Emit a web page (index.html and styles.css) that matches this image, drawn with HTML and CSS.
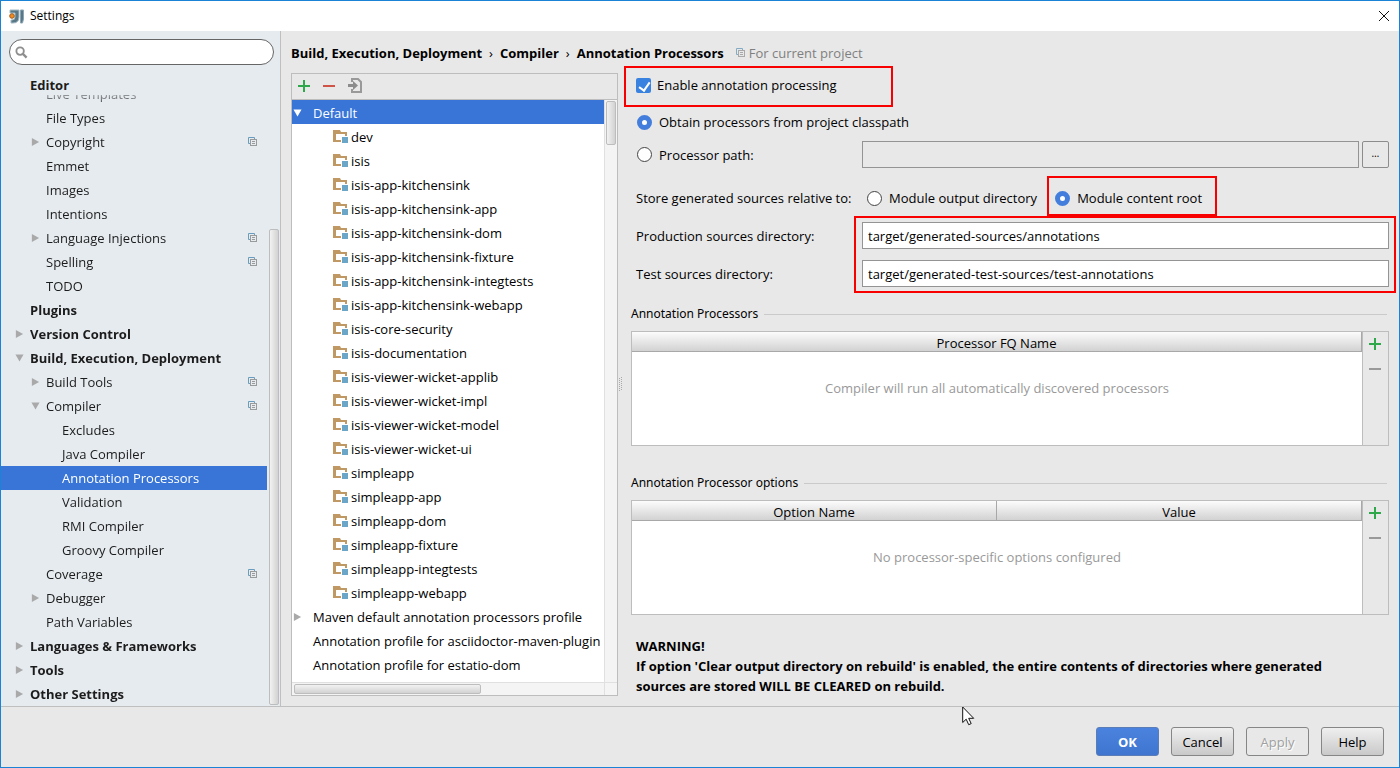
FILE: index.html
```html
<!DOCTYPE html>
<html lang="en">
<head>
<meta charset="utf-8">
<title>Settings</title>
<link rel="stylesheet" href="styles.css">
</head>
<body>
<svg class="defs" aria-hidden="true">
  <symbol id="copy" viewBox="0 0 10 10"><path d="M2.5 6.5H.5V.5h6v2" fill="none" stroke="#6a9cbb"/><rect x="2.500" y="2.500" width="6" height="6" fill="none" stroke="#9a9a9a"/><path d="M4 4.500h3M4 6.500h3" stroke="#9a9a9a"/></symbol>
  <symbol id="right" viewBox="0 0 10 10"><path d="M1 0.500 9 5 1 9.500Z" fill="currentColor"/></symbol>
  <symbol id="down" viewBox="0 0 10 10"><path d="M0.500 1h9L5 9Z" fill="currentColor"/></symbol>
  <symbol id="folder" viewBox="0 0 16 14"><path d="M0 0h7l1 2h6v4h-2V4H3v6h5v2H0Z" fill="#c09863"/><rect x="9" y="7" width="6" height="6" fill="#6ba5c8"/></symbol>
  <symbol id="plus" viewBox="0 0 12 12"><path d="M5 0h2v5h5v2H7v5H5V7H0V5h5Z" fill="#2fa74b"/></symbol>
  <symbol id="minus" viewBox="0 0 12 12"><path d="M0 5h12v2H0Z" fill="currentColor"/></symbol>
</svg>
<div class="window">
  <header class="titlebar">
    <svg class="logo" viewBox="0 0 16 15"><path d="M1 1h9v7q0 6-6 6H2v-3h1q3 0 3-3V4H1Z" fill="#587888" stroke="#a4bac4"/><path d="M11.500 1h3v9l-1 4h-2Z" fill="#587888" stroke="#8ba5b2"/><circle cx="3" cy="7" r="2.300" fill="#f28c1e" stroke="#a05a20"/></svg>
    <h1>Settings</h1>
    <button class="close" aria-label="Close"><svg viewBox="0 0 12 12"><path d="m1 1 10 10M11 1 1 11" stroke="#111" fill="none"/></svg></button>
  </header>
  <div class="body">
    <aside class="sidebar">
      <div class="search">
        <svg viewBox="0 0 14 14"><circle cx="5.500" cy="5.500" r="4" fill="none" stroke="#8e8e8e" stroke-width="2"/><path d="m8.500 8.500 4 4" stroke="#8e8e8e" stroke-width="2.500"/></svg>
        <input type="search" aria-label="Search settings">
      </div>
      <div class="group">Editor</div>
      <div class="nav-area">
        <ul class="nav">
          <li class="l2">Live Templates</li>
          <li class="l2">File Types</li>
          <li class="l2"><svg class="arrow"><use href="#right"/></svg>Copyright<svg class="copy"><use href="#copy"/></svg></li>
          <li class="l2">Emmet</li>
          <li class="l2">Images</li>
          <li class="l2">Intentions</li>
          <li class="l2"><svg class="arrow"><use href="#right"/></svg>Language Injections<svg class="copy"><use href="#copy"/></svg></li>
          <li class="l2">Spelling<svg class="copy"><use href="#copy"/></svg></li>
          <li class="l2">TODO</li>
          <li class="l1">Plugins</li>
          <li class="l1"><svg class="arrow"><use href="#right"/></svg>Version Control</li>
          <li class="l1"><svg class="arrow"><use href="#down"/></svg>Build, Execution, Deployment</li>
          <li class="l2"><svg class="arrow"><use href="#right"/></svg>Build Tools<svg class="copy"><use href="#copy"/></svg></li>
          <li class="l2"><svg class="arrow"><use href="#down"/></svg>Compiler<svg class="copy"><use href="#copy"/></svg></li>
          <li class="l3">Excludes</li>
          <li class="l3">Java Compiler</li>
          <li class="l3 selected">Annotation Processors</li>
          <li class="l3">Validation</li>
          <li class="l3">RMI Compiler</li>
          <li class="l3">Groovy Compiler</li>
          <li class="l2">Coverage<svg class="copy"><use href="#copy"/></svg></li>
          <li class="l2"><svg class="arrow"><use href="#right"/></svg>Debugger</li>
          <li class="l2">Path Variables</li>
          <li class="l1"><svg class="arrow"><use href="#right"/></svg>Languages &amp; Frameworks</li>
          <li class="l1"><svg class="arrow"><use href="#right"/></svg>Tools</li>
          <li class="l1"><svg class="arrow"><use href="#right"/></svg>Other Settings</li>
        </ul>
        <div class="nav-scroll"><div class="thumb"></div></div>
      </div>
    </aside>
    <main class="main">
      <div class="crumbs">
        <b>Build, Execution, Deployment</b><span>›</span><b>Compiler</b><span>›</span><b>Annotation Processors</b>
        <svg class="copy"><use href="#copy"/></svg><span class="scope">For current project</span>
      </div>
      <div class="panels">
        <section class="profiles">
          <div class="toolbar">
            <button aria-label="Add"><svg viewBox="0 0 12 12"><use href="#plus"/></svg></button>
            <button class="red" aria-label="Remove"><svg viewBox="0 0 12 12"><use href="#minus"/></svg></button>
            <button aria-label="Move to"><svg class="move" viewBox="0 0 14 15"><path d="M4 4V1h6l3 3v10H4v-3" fill="none" stroke="#999" stroke-width="2"/><path d="M0 6h5V3l5 4.500L5 12V9H0Z" fill="#8c8c8c"/></svg></button>
          </div>
          <div class="list-area">
            <ul class="list">
              <li class="root selected"><svg class="arrow"><use href="#down"/></svg>Default</li>
              <li><svg class="folder"><use href="#folder"/></svg>dev</li>
              <li><svg class="folder"><use href="#folder"/></svg>isis</li>
              <li><svg class="folder"><use href="#folder"/></svg>isis-app-kitchensink</li>
              <li><svg class="folder"><use href="#folder"/></svg>isis-app-kitchensink-app</li>
              <li><svg class="folder"><use href="#folder"/></svg>isis-app-kitchensink-dom</li>
              <li><svg class="folder"><use href="#folder"/></svg>isis-app-kitchensink-fixture</li>
              <li><svg class="folder"><use href="#folder"/></svg>isis-app-kitchensink-integtests</li>
              <li><svg class="folder"><use href="#folder"/></svg>isis-app-kitchensink-webapp</li>
              <li><svg class="folder"><use href="#folder"/></svg>isis-core-security</li>
              <li><svg class="folder"><use href="#folder"/></svg>isis-documentation</li>
              <li><svg class="folder"><use href="#folder"/></svg>isis-viewer-wicket-applib</li>
              <li><svg class="folder"><use href="#folder"/></svg>isis-viewer-wicket-impl</li>
              <li><svg class="folder"><use href="#folder"/></svg>isis-viewer-wicket-model</li>
              <li><svg class="folder"><use href="#folder"/></svg>isis-viewer-wicket-ui</li>
              <li><svg class="folder"><use href="#folder"/></svg>simpleapp</li>
              <li><svg class="folder"><use href="#folder"/></svg>simpleapp-app</li>
              <li><svg class="folder"><use href="#folder"/></svg>simpleapp-dom</li>
              <li><svg class="folder"><use href="#folder"/></svg>simpleapp-fixture</li>
              <li><svg class="folder"><use href="#folder"/></svg>simpleapp-integtests</li>
              <li><svg class="folder"><use href="#folder"/></svg>simpleapp-webapp</li>
              <li class="root"><svg class="arrow"><use href="#right"/></svg>Maven default annotation processors profile</li>
              <li class="root">Annotation profile for asciidoctor-maven-plugin</li>
              <li class="root">Annotation profile for estatio-dom</li>
            </ul>
            <div class="vscroll"><div class="thumb"></div></div>
            <div class="hscroll"><div class="thumb"></div></div>
            <div class="corner"></div>
          </div>
        </section>
        <div class="splitter"><svg viewBox="0 0 4 15"><path d="M.5 1v14M2.500 0v14" stroke="#aaa" stroke-dasharray="1 1"/></svg></div>
        <form class="form">
          <div class="row enable"><label class="check marked"><input type="checkbox" checked>Enable annotation processing</label></div>
          <div class="row obtain"><label class="radio"><input type="radio" name="source" checked>Obtain processors from project classpath</label></div>
          <div class="row fields path">
            <label class="radio"><input type="radio" name="source">Processor path:</label>
            <div class="path-field"><input class="text" type="text" aria-label="Processor path" disabled><button type="button" class="browse" aria-label="Browse">…</button></div>
          </div>
          <div class="row fields store">
            <span>Store generated sources relative to:</span>
            <div class="choices">
              <label class="radio"><input type="radio" name="root">Module output directory</label>
              <label class="radio marked"><input type="radio" name="root" checked>Module content root</label>
            </div>
          </div>
          <div class="dirs">
            <label for="prod">Production sources directory:</label>
            <label for="test">Test sources directory:</label>
            <div class="dir-inputs marked">
              <input class="text" id="prod" type="text" value="target/generated-sources/annotations">
              <input class="text" id="test" type="text" value="target/generated-test-sources/test-annotations">
            </div>
          </div>
          <h2 class="legend">Annotation Processors</h2>
          <div class="table-box">
            <table>
              <thead><tr><th>Processor FQ Name</th></tr></thead>
              <tbody><tr><td>Compiler will run all automatically discovered processors</td></tr></tbody>
            </table>
            <div class="actions"><button type="button" aria-label="Add processor"><svg viewBox="0 0 12 12"><use href="#plus"/></svg></button><button type="button" aria-label="Remove processor"><svg viewBox="0 0 12 12"><use href="#minus"/></svg></button></div>
          </div>
          <h2 class="legend second">Annotation Processor options</h2>
          <div class="table-box">
            <table>
              <thead><tr><th>Option Name</th><th>Value</th></tr></thead>
              <tbody><tr><td colspan="2">No processor-specific options configured</td></tr></tbody>
            </table>
            <div class="actions"><button type="button" aria-label="Add option"><svg viewBox="0 0 12 12"><use href="#plus"/></svg></button><button type="button" aria-label="Remove option"><svg viewBox="0 0 12 12"><use href="#minus"/></svg></button></div>
          </div>
          <p class="warning">WARNING!<br>If option 'Clear output directory on rebuild' is enabled, the entire contents of directories where generated<br>sources are stored WILL BE CLEARED on rebuild.</p>
        </form>
      </div>
    </main>
  </div>
  <footer class="footer">
    <button class="btn primary">OK</button>
    <button class="btn">Cancel</button>
    <button class="btn" disabled>Apply</button>
    <button class="btn">Help</button>
  </footer>
  <svg class="cursor" viewBox="0 0 13 20"><path d="M.7 1v15.500l3.500-3.300 2.500 5.500 2.500-1.100-2.500-5.300h5Z" fill="#fff" stroke="#111"/></svg>
</div>
</body>
</html>
```
FILE: styles.css
```css
* { box-sizing: border-box; }
body { margin: 0; font: 13px/24px "Open Sans", "Noto Sans", sans-serif; color: #000; }
ul { list-style: none; margin: 0; padding: 0; }
button, input { font: inherit; color: inherit; margin: 0; padding: 0; }
svg { display: block; flex: none; }
.defs { position: absolute; width: 0; height: 0; }

.window { position: relative; display: flex; flex-direction: column; min-height: 100vh; border: 1px solid #1a83d5; background: #e8e8e8; }
.titlebar { display: flex; align-items: center; gap: 5px; height: 30px; padding: 0 9px 0 8px; background: #fff; }
.titlebar h1 { flex: 1; margin: 0; font-size: 12px; font-weight: 400; }
.logo { width: 16px; height: 15px; }
.close { border: 0; background: none; }
.close svg { width: 12px; height: 12px; }
.body { flex: 1; display: flex; border-bottom: 1px solid #bfbfbf; }

.sidebar { display: flex; flex-direction: column; width: 280px; flex: none; background: #e6ebef; border-right: 1px solid #bfbfbf; color: #1c1c1c; }
.search { display: flex; align-items: center; gap: 4px; height: 26px; margin: 8px 6px 0 8px; padding: 0 10px 0 5px; background: #fff; border: 1px solid #666; border-radius: 13px; }
.search svg { width: 13px; height: 13px; }
.search input { flex: 1; min-width: 0; border: 0; outline: 0; background: none; }
.group { height: 22px; margin-top: 8px; padding-left: 29px; font-weight: 700; }
.nav-area { flex: 1 1 0; display: flex; height: 0; }
.nav { flex: 1; display: flex; flex-direction: column; justify-content: flex-end; overflow: hidden; mask-image: linear-gradient(rgba(0, 0, 0, 0.4), #000 12px); }
.nav li { position: relative; flex: none; display: flex; align-items: center; height: 24px; padding-right: 9px; white-space: nowrap; }
.nav .l1 { padding-left: 29px; font-weight: 700; }
.nav .l2 { padding-left: 45px; }
.nav .l3 { padding-left: 61px; }
.arrow { width: 9px; height: 10px; color: #a9a9a9; margin-left: -15px; margin-right: 6px; }
.copy { width: 10px; height: 10px; }
.nav .copy { margin-left: auto; }
.selected { background: #3875d7; color: #fff; }
.nav-scroll { display: flex; flex-direction: column; justify-content: flex-end; width: 13px; padding: 0 1px 1px 2px; }
.thumb { border: 1px solid #bdbdbd; border-radius: 2px; background: linear-gradient(90deg, #f2f2f2, #d2d2d2); }
.nav-scroll .thumb { height: 78%; }

.main { flex: 1; min-width: 0; display: flex; flex-direction: column; padding: 10px; }
.crumbs { display: flex; align-items: center; height: 24px; margin-bottom: 8px; white-space: nowrap; }
.crumbs span { padding: 0 7px; }
.crumbs .copy { margin-left: 12px; opacity: 0.8; }
.crumbs .scope { padding: 0 3px; color: #808080; }
.panels { flex: 1; display: flex; }

.profiles { flex: none; display: flex; flex-direction: column; width: 327px; border: 1px solid #bdbdbd; }
.toolbar { display: flex; align-items: center; gap: 13px; height: 26px; padding: 0 0 2px 6px; border-bottom: 1px solid #bdbdbd; }
.toolbar button, .actions button { border: 0; background: none; }
.toolbar svg, .actions svg { width: 12px; height: 12px; }
.toolbar .move { width: 14px; height: 15px; }
.red { color: #cf5347; }
.list-area { flex: 1; display: grid; grid-template-columns: minmax(0, 1fr) 13px; grid-template-rows: 1fr 13px; }
.list { overflow: hidden; background: #fff; }
.list li { display: flex; align-items: center; height: 24px; padding-top: 2px; padding-left: 41px; white-space: nowrap; }
.list .root { padding-left: 21px; }
.list .arrow { margin-left: -20px; margin-right: 11px; }
.list .selected .arrow { color: #fff; }
.folder { width: 16px; height: 14px; margin-right: 2px; }
.vscroll, .hscroll, .corner { background: #f4f4f4; border: 0 solid #e0e0e0; }
.vscroll { border-left-width: 1px; padding: 1px; }
.hscroll { border-top-width: 1px; padding: 1px 2px; }
.corner { border-width: 1px 0 0 1px; }
.vscroll .thumb { height: 44px; }
.hscroll .thumb { width: 187px; height: 10px; background: linear-gradient(#f2f2f2, #d2d2d2); }
.splitter { display: flex; align-items: center; width: 13px; flex: none; padding-left: 1px; }
.splitter svg { width: 4px; height: 15px; }

.form { flex: 1; min-width: 0; }
.row { display: flex; align-items: center; height: 24px; padding-left: 5px; }
.fields, .dirs { display: grid; grid-template-columns: 226px minmax(0, 1fr); padding-left: 5px; }
.check, .radio { display: flex; align-items: center; gap: 6px; white-space: nowrap; }
.check input, .radio input { appearance: none; flex: none; width: 15px; height: 15px; }
.check input { border-radius: 2px; background: #3a82e0; position: relative; }
.check input::after { content: ""; position: absolute; left: 5px; top: 2px; width: 5px; height: 9px; border: solid #fff; border-width: 0 2px 2px 0; transform: rotate(35deg); }
.radio { gap: 7px; padding-left: 1px; }
.radio input { border: 1px solid #444; border-radius: 50%; background: #fff; }
.radio input:checked { border: 5px solid #447edc; }
.marked { position: relative; }
.marked::before { content: ""; position: absolute; border: 2px solid #f80000; pointer-events: none; }
.check.marked::before { inset: -7px -56px -10px -12px; }
.radio.marked::before { inset: -10px -15px -6px -7px; }
.dir-inputs.marked::before { inset: -6px -7px -6px -8px; }
.obtain { margin-top: 13px; }
.path { height: 27px; margin-top: 7px; }
.path-field { display: flex; gap: 3px; }
.text { flex: 1; width: 100%; min-width: 0; height: 27px; padding: 0 5px; border: 1px solid #949494; background: #fff; }
.text:disabled { background: #e8e8e8; }
.browse { width: 27px; height: 27px; padding-bottom: 4px; border: 1px solid #8c8c8c; border-radius: 2px; background: #e8e8e8; font-size: 10px; line-height: 20px; }
.store { margin-top: 18px; white-space: nowrap; }
.choices { display: flex; gap: 17px; padding-left: 4px; }
.dirs { margin-top: 12px; grid-template-rows: 27px 27px; row-gap: 11px; align-items: center; }
.dir-inputs { grid-area: 1 / 2 / 3 / 3; display: flex; flex-direction: column; gap: 11px; }
.dir-inputs .text { flex: none; }
.legend { display: flex; align-items: center; gap: 6px; height: 24px; margin: 15px 2px 5px 0; font: 400 12px/24px "Noto Sans", sans-serif; }
.legend::after { content: ""; flex: 1; height: 1px; background: #cacaca; }
.second { margin-top: 25px; }
.table-box { display: flex; height: 115px; border: 1px solid #bdbdbd; }
table { flex: 1; width: 100%; height: 100%; border-collapse: separate; border-spacing: 0; table-layout: fixed; background: #fff; }
th { height: 20px; padding: 3px 0 0; line-height: 16px; font-weight: 400; background: linear-gradient(#fcfcfc, #d2d2d2); border-right: 1px solid #a8a8a8; border-bottom: 1px solid #a8a8a8; }
td { padding: 24px 0 0; vertical-align: top; text-align: center; color: #999; }
.actions { display: flex; flex: none; flex-direction: column; align-items: center; gap: 13px; width: 26px; padding: 6px 2px 0 0; border-left: 1px solid #bdbdbd; color: #999; }
.warning { margin: 21px 0 0; padding-left: 5px; line-height: 20px; font-weight: 700; }

.footer { display: flex; justify-content: flex-end; gap: 12px; height: 60px; padding: 20px 15px 0 0; }
.btn { width: 63px; height: 29px; border: 1px solid #868686; border-radius: 3px; background: linear-gradient(#efefef, #c9c9c9); }
.btn.primary { color: #fff; font-weight: 700; background: linear-gradient(#4a83df, #3f75cf); border-color: #5a7db8; }
.btn:disabled { color: #a0a0a0; background: #e8e8e8; text-shadow: 1px 1px #fff; }
.cursor { position: absolute; left: 961px; top: 705px; width: 13px; height: 20px; }
```
